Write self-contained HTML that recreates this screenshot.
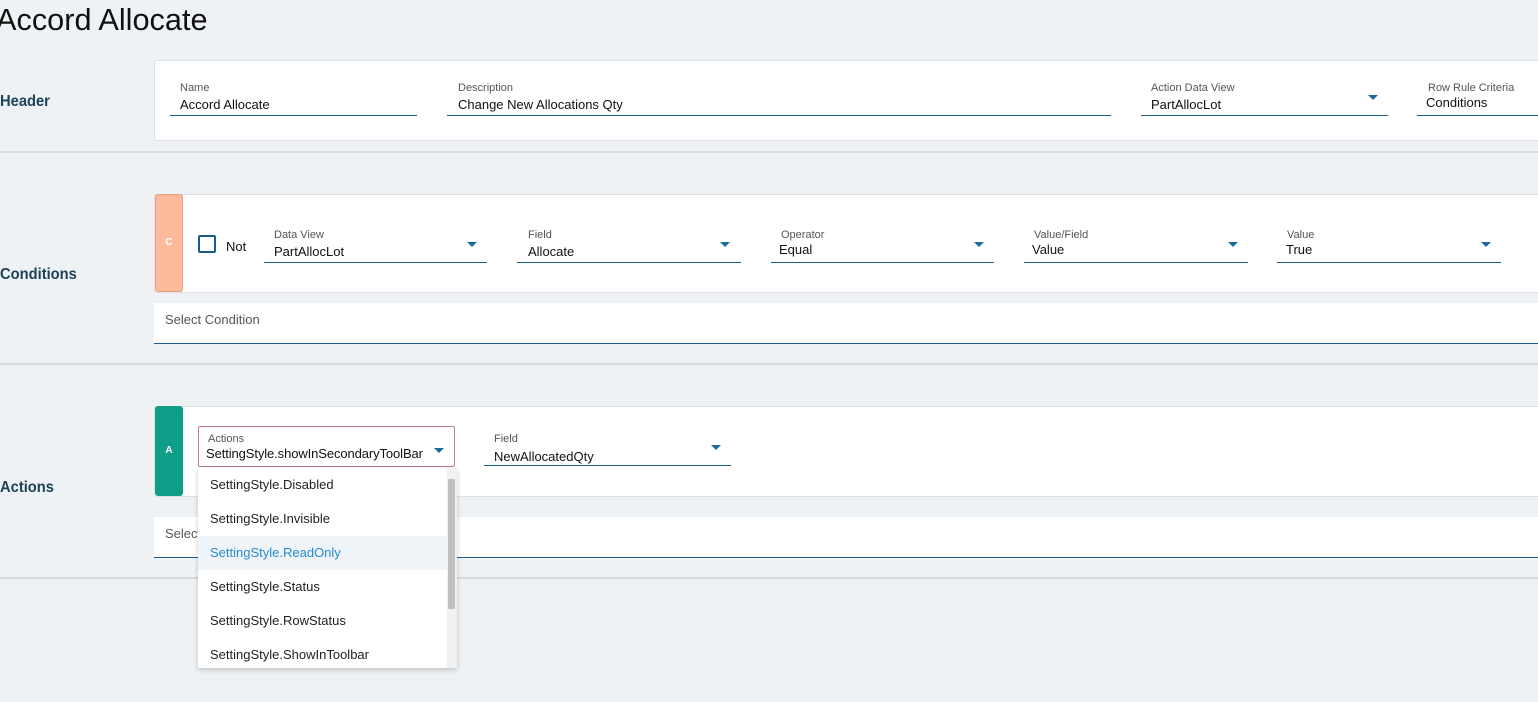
<!DOCTYPE html>
<html><head><meta charset="utf-8"><style>
*{margin:0;padding:0;box-sizing:border-box}
body{width:1538px;height:702px;background:#eef2f5;font-family:"Liberation Sans",sans-serif;position:relative;overflow:hidden;color:#222}
.a{position:absolute}
.card{position:absolute;background:#fff;border:1px solid #dde1e5;border-radius:3px}
.sep{position:absolute;left:0;width:1538px;height:2px;background:#d5dbe0}
.sec{position:absolute;left:0;font-size:16px;color:#1e4257;font-weight:bold;transform:scaleX(.92);transform-origin:left}
.lbl{position:absolute;font-size:11px;color:#555;white-space:nowrap}
.val{position:absolute;font-size:13px;color:#111;white-space:nowrap}
.ul{position:absolute;height:1px;background:#1a5c8c}
.arr{position:absolute;width:0;height:0;border-left:5px solid transparent;border-right:5px solid transparent;border-top:5px solid #1a6aa0}
.item{position:absolute;left:0;width:249px;height:34px;font-size:13px;line-height:34px;padding-left:12px;color:#222}
</style></head><body>
<div class="a" style="left:-4px;top:2px;font-size:31px;color:#111;transform:scaleX(.99);transform-origin:left">Accord Allocate</div>

<div class="sec" style="top:93px">Header</div>
<div class="card" style="left:154px;top:60px;width:1390px;height:81px"></div>
<div class="lbl" style="left:180px;top:82px">Name</div><div class="val" style="left:180px;top:97px">Accord Allocate</div><div class="ul" style="left:170px;top:115px;width:247px"></div>
<div class="lbl" style="left:458px;top:82px">Description</div><div class="val" style="left:458px;top:97px">Change New Allocations Qty</div><div class="ul" style="left:447px;top:115px;width:664px"></div>
<div class="lbl" style="left:1151px;top:82px">Action Data View</div><div class="val" style="left:1151px;top:97px">PartAllocLot</div><div class="ul" style="left:1141px;top:115px;width:247px"></div><div class="arr" style="left:1368px;top:95px"></div>
<div class="lbl" style="left:1428px;top:82px">Row Rule Criteria</div><div class="val" style="left:1426px;top:95px">Conditions</div><div class="ul" style="left:1417px;top:115px;width:121px"></div>
<div class="sep" style="top:151px"></div>

<div class="sec" style="top:266px">Conditions</div>
<div class="card" style="left:154px;top:194px;width:1390px;height:99px"></div>
<div class="a" style="left:155px;top:194px;width:28px;height:98px;background:#fdbb9b;border:1px solid #e8a080;border-radius:3px;color:#fff;font-size:10px;font-weight:bold;text-align:center;line-height:96px">C</div>
<div class="a" style="left:198px;top:235px;width:18px;height:18px;border:2px solid #1a5c8c;border-radius:2px"></div>
<div class="val" style="left:226px;top:239px">Not</div>
<div class="lbl" style="left:274px;top:229px">Data View</div><div class="val" style="left:274px;top:244px">PartAllocLot</div><div class="ul" style="left:264px;top:262px;width:223px"></div><div class="arr" style="left:467px;top:242px"></div>
<div class="lbl" style="left:528px;top:229px">Field</div><div class="val" style="left:528px;top:244px">Allocate</div><div class="ul" style="left:517px;top:262px;width:224px"></div><div class="arr" style="left:720px;top:242px"></div>
<div class="lbl" style="left:781px;top:229px">Operator</div><div class="val" style="left:779px;top:242px">Equal</div><div class="ul" style="left:771px;top:262px;width:223px"></div><div class="arr" style="left:974px;top:242px"></div>
<div class="lbl" style="left:1034px;top:229px">Value/Field</div><div class="val" style="left:1032px;top:242px">Value</div><div class="ul" style="left:1024px;top:262px;width:224px"></div><div class="arr" style="left:1228px;top:242px"></div>
<div class="lbl" style="left:1287px;top:229px">Value</div><div class="val" style="left:1286px;top:242px">True</div><div class="ul" style="left:1277px;top:262px;width:224px"></div><div class="arr" style="left:1481px;top:242px"></div>
<div class="a" style="left:154px;top:303px;width:1390px;height:41px;background:#fff;border-bottom:1px solid #1a5c8c"></div>
<div class="val" style="left:165px;top:312px;color:#555">Select Condition</div>
<div class="sep" style="top:363px"></div>

<div class="sec" style="top:479px">Actions</div>
<div class="card" style="left:154px;top:406px;width:1390px;height:91px"></div>
<div class="a" style="left:155px;top:406px;width:28px;height:90px;background:#0f9e88;border-radius:3px;color:#fff;font-size:10px;font-weight:bold;text-align:center;line-height:90px">A</div>
<div class="a" style="left:198px;top:426px;width:257px;height:41px;border:1px solid #c27aa0;border-radius:2px"></div>
<div class="lbl" style="left:208px;top:433px">Actions</div><div class="val" style="left:206px;top:446px;letter-spacing:-.1px">SettingStyle.showInSecondaryToolBar</div><div class="arr" style="left:434px;top:448px"></div>
<div class="lbl" style="left:494px;top:433px">Field</div><div class="val" style="left:494px;top:449px">NewAllocatedQty</div><div class="ul" style="left:484px;top:465px;width:247px"></div><div class="arr" style="left:711px;top:445px"></div>
<div class="a" style="left:154px;top:517px;width:1390px;height:41px;background:#fff;border-bottom:1px solid #1a5c8c"></div>
<div class="val" style="left:165px;top:526px;color:#555">Select</div>
<div class="sep" style="top:577px"></div>

<div class="a" style="left:198px;top:468px;width:259px;height:200px;background:#fff;box-shadow:0 2px 5px rgba(0,0,0,.2);overflow:hidden">
<div class="item" style="top:0">SettingStyle.Disabled</div>
<div class="item" style="top:34px">SettingStyle.Invisible</div>
<div class="item" style="top:68px;background:#eef4f7;color:#2a8ad0">SettingStyle.ReadOnly</div>
<div class="item" style="top:102px">SettingStyle.Status</div>
<div class="item" style="top:136px">SettingStyle.RowStatus</div>
<div class="item" style="top:170px">SettingStyle.ShowInToolbar</div>
<div class="a" style="left:249px;top:0;width:10px;height:200px;background:#f1f1f1"></div>
<div class="a" style="left:250px;top:11px;width:7px;height:130px;background:#c1c1c1"></div>
</div>
</body></html>
